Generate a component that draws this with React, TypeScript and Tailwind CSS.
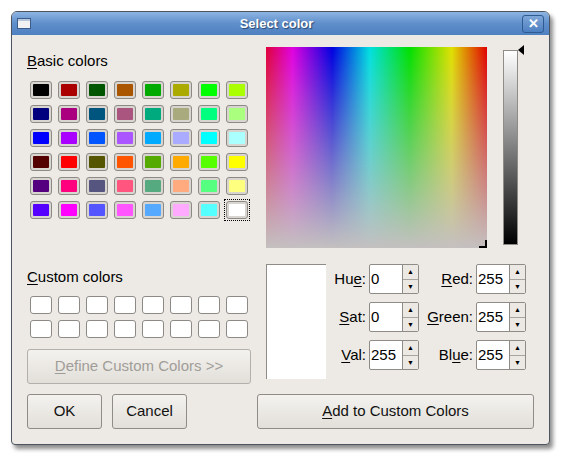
import React from "react";

const basic = [
  ["bg-[#000000]", "bg-[#aa0000]", "bg-[#005500]", "bg-[#aa5500]", "bg-[#00aa00]", "bg-[#aaaa00]", "bg-[#00ff00]", "bg-[#aaff00]"],
  ["bg-[#00007f]", "bg-[#aa007f]", "bg-[#00557f]", "bg-[#aa557f]", "bg-[#00aa7f]", "bg-[#aaaa7f]", "bg-[#00ff7f]", "bg-[#aaff7f]"],
  ["bg-[#0000ff]", "bg-[#aa00ff]", "bg-[#0055ff]", "bg-[#aa55ff]", "bg-[#00aaff]", "bg-[#aaaaff]", "bg-[#00ffff]", "bg-[#aaffff]"],
  ["bg-[#550000]", "bg-[#ff0000]", "bg-[#555500]", "bg-[#ff5500]", "bg-[#55aa00]", "bg-[#ffaa00]", "bg-[#55ff00]", "bg-[#ffff00]"],
  ["bg-[#55007f]", "bg-[#ff007f]", "bg-[#55557f]", "bg-[#ff557f]", "bg-[#55aa7f]", "bg-[#ffaa7f]", "bg-[#55ff7f]", "bg-[#ffff7f]"],
  ["bg-[#5500ff]", "bg-[#ff00ff]", "bg-[#5555ff]", "bg-[#ff55ff]", "bg-[#55aaff]", "bg-[#ffaaff]", "bg-[#55ffff]", "bg-[#ffffff]"],
];

function Swatch({ c, focus }: { c: string; focus?: boolean }) {
  return (
    <div className={"w-[28px] h-[24px] flex items-center justify-center " + (focus ? "outline outline-1 outline-dotted outline-black -outline-offset-[2px]" : "")}>
      <div className="w-[22px] h-[18px] rounded-[3px] border border-[#8d8a86] bg-[#d8d5d0] p-[2px]">
        <div className={"w-full h-full rounded-[1px] " + c} />
      </div>
    </div>
  );
}

function Btn({ children, w, disabled }: { children: React.ReactNode; w: string; disabled?: boolean }) {
  return (
    <div className={"h-[35px] rounded-[3px] border border-[#8f8c87] bg-[linear-gradient(to_bottom,#f4f2ef,#e2dfd9)] flex items-center justify-center text-[15px] " + w + (disabled ? " text-[#a09d98] border-[#b3b0ab]" : " text-[#111]")}>
      {children}
    </div>
  );
}

function Spin({ label, value, lw }: { label: [string, string, string]; value: string; lw: string }) {
  return (
    <div className="flex items-center h-[30px]">
      <div className={"text-right text-[15px] pr-[3px] " + lw}>
        {label[0]}<span className="underline underline-offset-2">{label[1]}</span>{label[2]}
      </div>
      <div className="w-[50px] h-[30px] border border-[#8f8c87] rounded-[2px] bg-white flex">
        <div className="flex-1 flex items-center pl-[1px] text-[15px]">{value}</div>
        <div className="w-[16px] flex flex-col border-l border-[#8f8c87] bg-[#ece9e4]">
          <div className="flex-1 flex items-center justify-center border-b border-[#a8a5a0] text-[7px] leading-none">▲</div>
          <div className="flex-1 flex items-center justify-center text-[7px] leading-none">▼</div>
        </div>
      </div>
    </div>
  );
}

export default function App() {
  return (
    <div className="w-[569px] h-[465px] bg-white pt-[11px] pl-[11px]" style={{ fontFamily: "'Liberation Sans', sans-serif" }}>
      <div className="w-[539px] h-[434px] rounded-t-[6px] rounded-b-[4px] border border-[#4d5560] bg-[#edeae5] shadow-[3px_4px_4px_rgba(0,0,0,0.45)] overflow-hidden flex flex-col">
        <div className="h-[23px] bg-[linear-gradient(to_bottom,#8db4e2,#5f8fcb_50%,#4f80c0)] flex items-center px-[5px] relative">
          <div className="w-[14px] h-[11px] border border-[#3c5d8b] bg-[#f2f2f2] shadow-[inset_0_2px_0_#b8c8dc]" />
          <div className="flex-1 text-center text-white font-bold text-[13px] [font-family:'DejaVu_Sans',sans-serif] [text-shadow:1px_1px_1px_#2b4870]">Select color</div>
          <div className="w-[22px] h-[18px] rounded-[3px] border border-[#2f5a92] bg-[linear-gradient(to_bottom,#7fa7d8,#4d7fc0)] flex items-center justify-center text-white font-bold text-[13px] leading-none">✕</div>
        </div>
        <div className="flex flex-col pl-[15px]">
          <div className="flex">
            <div className="w-[224px] flex flex-col">
              <div className="mt-[18px] h-[16px] text-[15px] leading-[16px]"><span className="underline underline-offset-2">B</span>asic colors</div>
              <div className="mt-[9px] flex flex-col">
                {basic.map((r, i) => (
                  <div key={i} className="flex">
                    {r.map((c, j) => <Swatch key={j} c={c} focus={i === 5 && j === 7} />)}
                  </div>
                ))}
              </div>
              <div className="mt-[47px] h-[16px] text-[15px] leading-[16px]"><span className="underline underline-offset-2">C</span>ustom colors</div>
              <div className="mt-[8px] flex flex-col">
                {[0, 1].map((i) => (
                  <div key={i} className="flex">
                    {[0, 1, 2, 3, 4, 5, 6, 7].map((j) => (
                      <div key={j} className="w-[28px] h-[24px] flex items-center justify-center">
                        <div className="w-[22px] h-[18px] rounded-[3px] border border-[#8d8a86] bg-white" />
                      </div>
                    ))}
                  </div>
                ))}
              </div>
              <div className="mt-[8px]">
                <Btn w="w-[224px]" disabled><span className="underline underline-offset-2">D</span>efine Custom Colors &gt;&gt;</Btn>
              </div>
            </div>
            <div className="ml-[6px] flex flex-col">
              <div className="flex mt-[12px] ml-[9px]">
                <div className="w-[221px] h-[201px] relative bg-[linear-gradient(to_right,#e0003a,#e000e0_12%,#0000e0_30%,#00e0e0_47%,#00e000_65%,#e0e000_84%,#e00000)]">
                  <div className="absolute inset-0 bg-[linear-gradient(to_bottom,rgba(196,196,196,0),#c4c0c0)]" />
                  <div className="absolute right-0 bottom-0 w-[8px] h-[8px] border-r-2 border-b-2 border-black" />
                </div>
                <div className="ml-[16px] mt-[3px] w-[15px] h-[195px] border border-[#8f8c87] bg-[linear-gradient(to_bottom,#ffffff,#000000)]" />
                <div className="mt-[-2px] w-0 h-0 border-y-[5px] border-y-transparent border-r-[6px] border-r-black" />
              </div>
              <div className="flex mt-[16px] ml-[9px]">
                <div className="w-[60px] h-[115px] bg-white border-l border-t border-[#8f8c87]" />
                <div className="flex flex-col gap-[8px]">
                  <Spin label={["Hu", "e", ":"]} value="0" lw="w-[43px]" />
                  <Spin label={["", "S", "at:"]} value="0" lw="w-[43px]" />
                  <Spin label={["", "V", "al:"]} value="255" lw="w-[43px]" />
                </div>
                <div className="flex flex-col gap-[8px]">
                  <Spin label={["", "R", "ed:"]} value="255" lw="w-[57px]" />
                  <Spin label={["", "G", "reen:"]} value="255" lw="w-[57px]" />
                  <Spin label={["Bl", "u", "e:"]} value="255" lw="w-[57px]" />
                </div>
              </div>
            </div>
          </div>
          <div className="flex mt-[10px]">
            <Btn w="w-[75px]">OK</Btn>
            <div className="ml-[10px]"><Btn w="w-[75px]">Cancel</Btn></div>
            <div className="ml-[70px]"><Btn w="w-[277px]"><span className="underline underline-offset-2">A</span>dd to Custom Colors</Btn></div>
          </div>
        </div>
      </div>
    </div>
  );
}
